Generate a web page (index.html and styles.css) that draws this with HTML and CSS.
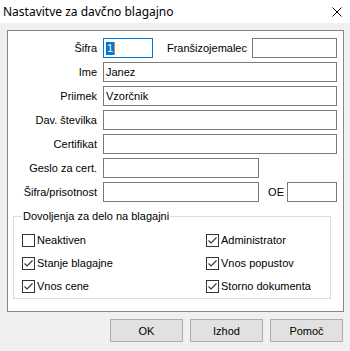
FILE: index.html
```html
<!DOCTYPE html>
<html lang="sl">
<head>
<meta charset="utf-8">
<title>Nastavitve za davčno blagajno</title>
<link rel="stylesheet" href="styles.css">
</head>
<body>
<div class="window">
  <div class="titlebar">
    <span class="title">Nastavitve za davčno blagajno</span>
    <svg class="close" width="10" height="10" viewBox="0 0 10 10"><path d="M0.5 0.5 L9.5 9.5 M9.5 0.5 L0.5 9.5" stroke="#000" stroke-width="1" fill="none"/></svg>
  </div>
  <div class="client">
    <div class="panel">
      <div class="row">
        <span class="lbl">Šifra</span>
        <div class="inp short focus"><span class="sel">1</span></div>
        <span class="lbl2 fr">Franšizojemalec</span>
        <div class="inp fran"></div>
      </div>
      <div class="row">
        <span class="lbl">Ime</span>
        <div class="inp">Janez</div>
      </div>
      <div class="row">
        <span class="lbl">Priimek</span>
        <div class="inp">Vzorčnik</div>
      </div>
      <div class="row sep">
        <span class="lbl">Dav. številka</span>
        <div class="inp"></div>
      </div>
      <div class="row">
        <span class="lbl">Certifikat</span>
        <div class="inp"></div>
      </div>
      <div class="row">
        <span class="lbl">Geslo za cert.</span>
        <div class="inp mid"></div>
      </div>
      <div class="row last">
        <span class="lbl">Šifra/prisotnost</span>
        <div class="inp mid"></div>
        <span class="lbl2 oe">OE</span>
        <div class="inp short"></div>
      </div>
      <fieldset class="group">
        <legend>Dovoljenja za delo na blagajni</legend>
        <div class="checks">
          <div class="chk"><span class="box"></span>Neaktiven</div>
          <div class="chk"><span class="box"><svg viewBox="0 0 11 11" width="11" height="11"><polyline points="1.5,5.5 4,8 9.5,2.5" fill="none" stroke="#333" stroke-width="1.1"/></svg></span>Administrator</div>
          <div class="chk"><span class="box"><svg viewBox="0 0 11 11" width="11" height="11"><polyline points="1.5,5.5 4,8 9.5,2.5" fill="none" stroke="#333" stroke-width="1.1"/></svg></span>Stanje blagajne</div>
          <div class="chk"><span class="box"><svg viewBox="0 0 11 11" width="11" height="11"><polyline points="1.5,5.5 4,8 9.5,2.5" fill="none" stroke="#333" stroke-width="1.1"/></svg></span>Vnos popustov</div>
          <div class="chk"><span class="box"><svg viewBox="0 0 11 11" width="11" height="11"><polyline points="1.5,5.5 4,8 9.5,2.5" fill="none" stroke="#333" stroke-width="1.1"/></svg></span>Vnos cene</div>
          <div class="chk"><span class="box"><svg viewBox="0 0 11 11" width="11" height="11"><polyline points="1.5,5.5 4,8 9.5,2.5" fill="none" stroke="#333" stroke-width="1.1"/></svg></span>Storno dokumenta</div>
        </div>
      </fieldset>
    </div>
    <div class="buttons">
      <button class="btn">OK</button>
      <button class="btn">Izhod</button>
      <button class="btn">Pomoč</button>
    </div>
  </div>
</div>
</body>
</html>
```

FILE: styles.css
```css
html, body {
  margin: 0;
  padding: 0;
}
body {
  width: 350px;
  height: 351px;
  overflow: hidden;
  background: #f0f0f0;
  font-family: "Liberation Sans", Arial, sans-serif;
  font-size: 11px;
  color: #000;
}
.titlebar {
  height: 23px;
  background: #fff;
  display: flex;
  align-items: center;
  justify-content: space-between;
  padding: 0 8px 0 3px;
}
.title {
  font-family: "Noto Sans", "Liberation Sans", sans-serif;
  font-size: 12px;
  color: #000;
}
.close {
  display: block;
}
.client {
  padding: 7px 6px 0 7px;
}
.panel {
  background: #fff;
  border: 1px solid #828790;
  padding: 7px 6px 12px 0;
}
.row {
  display: flex;
  align-items: center;
  height: 20px;
  margin-bottom: 4px;
}
.row.sep {
  margin-top: 4px;
}
.row.last {
  margin-bottom: 0;
}
.lbl {
  flex: none;
  width: 89px;
  margin-right: 6px;
  text-align: right;
  white-space: nowrap;
}
.lbl2 {
  flex: 1;
  text-align: right;
  white-space: nowrap;
}
.lbl2.fr {
  margin-right: 5px;
}
.lbl2.oe {
  margin-right: 3px;
}
.inp {
  flex: 1;
  height: 20px;
  box-sizing: border-box;
  border: 1px solid #7a7a7a;
  background: #fff;
  padding-left: 2px;
  display: flex;
  align-items: center;
  white-space: nowrap;
}
.inp.short {
  flex: none;
  width: 50px;
}
.inp.mid {
  flex: none;
  width: 156px;
}
.inp.fran {
  flex: none;
  width: 85px;
}
.inp.focus {
  border-color: #0078d7;
}
.sel {
  background: #0078d7;
  color: #fff;
  line-height: 13px;
  padding: 0 1px 0 1px;
  border-right: 1px solid #f08020;
}
.group {
  margin: 8px 6px 0 5px;
  padding: 11px 0 5px 8px;
  border: 1px solid #dcdcdc;
  min-width: 0;
}
.group legend {
  padding: 0 1px;
  line-height: 13px;
}
.checks {
  display: grid;
  grid-template-columns: 184px 1fr;
  grid-auto-rows: 13px;
  row-gap: 10px;
}
.chk {
  display: flex;
  align-items: center;
  white-space: nowrap;
  line-height: 13px;
}
.box {
  flex: none;
  width: 13px;
  height: 13px;
  box-sizing: border-box;
  border: 1px solid #333;
  background: #fff;
  margin-right: 2px;
  display: flex;
}
.box svg {
  display: block;
}
.buttons {
  display: flex;
  justify-content: flex-end;
  gap: 7px;
  padding: 7px 1px 0 0;
}
.btn {
  width: 73px;
  height: 23px;
  box-sizing: border-box;
  background: #e1e1e1;
  border: 1px solid #adadad;
  font-family: inherit;
  font-size: 11px;
  color: #000;
  padding: 0;
  margin: 0;
}
```
